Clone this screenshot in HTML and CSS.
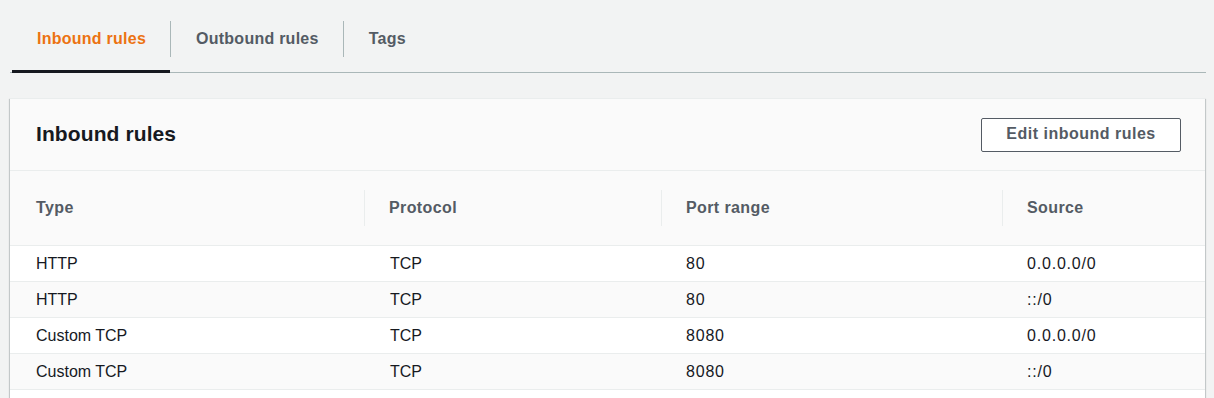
FILE: index.html
```html
<!DOCTYPE html>
<html>
<head>
<meta charset="utf-8">
<link rel="stylesheet" href="styles.css">
</head>
<body>
<div class="page">
  <div class="tabs">
    <div class="tab active">Inbound rules</div>
    <div class="tab">Outbound rules</div>
    <div class="tab">Tags</div>
  </div>
  <div class="panel">
    <div class="panel-header">
      <h2 class="title">Inbound rules</h2>
      <button class="btn">Edit inbound rules</button>
    </div>
    <div class="table">
      <div class="row head">
        <div class="cell">Type</div>
        <div class="cell sep">Protocol</div>
        <div class="cell sep">Port range</div>
        <div class="cell sep">Source</div>
      </div>
      <div class="row">
        <div class="cell">HTTP</div>
        <div class="cell">TCP</div>
        <div class="cell num">80</div>
        <div class="cell num">0.0.0.0/0</div>
      </div>
      <div class="row alt">
        <div class="cell">HTTP</div>
        <div class="cell">TCP</div>
        <div class="cell num">80</div>
        <div class="cell num">::/0</div>
      </div>
      <div class="row">
        <div class="cell">Custom TCP</div>
        <div class="cell">TCP</div>
        <div class="cell num">8080</div>
        <div class="cell num">0.0.0.0/0</div>
      </div>
      <div class="row alt">
        <div class="cell">Custom TCP</div>
        <div class="cell">TCP</div>
        <div class="cell num">8080</div>
        <div class="cell num">::/0</div>
      </div>
      <div class="spacer"></div>
    </div>
  </div>
</div>
</body>
</html>
```

FILE: styles.css
```css
html, body {
  margin: 0;
  padding: 0;
  background: #f2f3f3;
  font-family: "Liberation Sans", Arial, sans-serif;
  font-size: 16px;
  color: #16191f;
}

.page {
  padding: 0 8px 0 10px;
}

.tabs {
  display: flex;
  padding-top: 21px;
  padding-left: 2px;
  border-bottom: 1px solid #aab7b8;
  height: 51px;
}

.tab {
  position: relative;
  height: 36px;
  line-height: 36px;
  padding: 0 24px 0 25px;
  font-weight: 700;
  color: #545b64;
  letter-spacing: 0.25px;
}

.tab + .tab {
  border-left: 1px solid #aab7b8;
}

.tab.active {
  color: #ec7211;
}

.tab.active::after {
  content: "";
  position: absolute;
  left: 0;
  right: 0;
  bottom: -16px;
  height: 3px;
  background: #16191f;
}

.panel {
  margin-top: 25px;
  margin-right: 1px;
  background: #fff;
  box-shadow: 0 1px 1px 0 rgba(0, 28, 36, 0.3), 1px 1px 1px 0 rgba(0, 28, 36, 0.15), -1px 1px 1px 0 rgba(0, 28, 36, 0.15);
  border-top: 1px solid #eaeded;
}

.panel-header {
  display: flex;
  align-items: center;
  justify-content: space-between;
  height: 71px;
  padding: 0 24px 0 26px;
  background: #fafafa;
  border-bottom: 1px solid #eaeded;
}

.title {
  margin: 0 0 2px 0;
  font-size: 21px;
  font-weight: 700;
  letter-spacing: 0.1px;
  color: #16191f;
}

.btn {
  width: 200px;
  height: 34px;
  background: #fff;
  border: 1px solid #545b64;
  border-radius: 2px;
  font-family: "Liberation Sans", Arial, sans-serif;
  font-size: 16px;
  font-weight: 700;
  letter-spacing: 0.5px;
  color: #545b64;
  padding: 0 0 2px 0;
}

.row {
  display: grid;
  grid-template-columns: 354px 297px 341px 1fr;
  height: 35px;
  align-items: center;
  border-bottom: 1px solid #eaeded;
  background: #fff;
}

.row.alt {
  background: #fafafa;
}

.row.head {
  height: 74px;
  background: #fafafa;
  font-weight: 700;
  color: #545b64;
  letter-spacing: 0.4px;
}

.cell {
  padding-left: 26px;
  height: 36px;
  line-height: 36px;
}

.cell.num {
  padding-left: 25px;
  letter-spacing: 0.8px;
}

.cell.sep {
  border-left: 1px solid #eaeded;
  padding-left: 24px;
}

.spacer {
  height: 40px;
  background: #fff;
}
```
